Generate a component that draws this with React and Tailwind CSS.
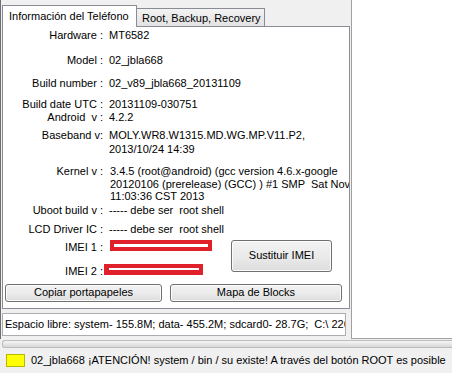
import React from 'react';

const Row = ({ label, className, children }) => {
  return (
    <div className={'flex leading-[13px] ' + className}>
      <div className="w-[100px] shrink-0 text-right whitespace-pre">{label}</div>
      <div className="pl-[6px] whitespace-pre">{children}</div>
    </div>
  );
};

const WinButton = ({ className, children }) => {
  return (
    <div
      className={
        'flex items-center justify-center rounded-[3px] border border-[#707070] bg-gradient-to-b from-[#f2f2f2] via-[#ebebeb] to-[#dddddd] shadow-[inset_0_0_0_1px_#fcfcfc] ' +
        className
      }
    >
      {children}
    </div>
  );
};

const App = () => {
  return (
    <div className="w-[452px] h-[373px] overflow-hidden bg-[#f0f0f0] flex flex-col font-['Liberation_Sans',Arial,sans-serif] text-[11px] text-black">
      <div className="flex h-[339px] shrink-0">
        {/* panel izquierdo */}
        <div className="w-[351px] h-full border-l border-[#6d6d6d] pl-[1px] flex flex-col">
          <div className="flex items-end h-[26px]">
            <div className="relative z-10 -mb-px h-[22px] w-[135px] bg-white border-t border-x border-[#898c95] pl-[6px] leading-[20px]">
              Información del Teléfono
            </div>
            <div className="h-[18px] w-[128px] border-t border-r border-[#898c95] bg-gradient-to-b from-[#f3f3f3] to-[#e2e2e2] pl-[5px] leading-[18px]">
              Root, Backup, Recovery
            </div>
          </div>

          <div className="w-[348px] h-[283px] border border-[#898c95] bg-white overflow-hidden flex flex-col">
            <Row label="Hardware :" className="mt-[2px]">MT6582</Row>
            <Row label="Model :" className="mt-[12px]">02_jbla668</Row>
            <Row label="Build number :" className="mt-[10px]">02_v89_jbla668_20131109</Row>
            <Row label="Build date UTC :" className="mt-[8px]">20131109-030751</Row>
            <Row label="Android  v :" className="mt-[0px]">4.2.2</Row>
            <div className="flex mt-[4px] leading-[14px]">
              <div className="w-[100px] shrink-0 text-right">Baseband v:</div>
              <div className="pl-[6px] whitespace-pre">
                {'MOLY.WR8.W1315.MD.WG.MP.V11.P2,\n2013/10/24 14:39'}
              </div>
            </div>
            <div className="flex mt-[9px] leading-[12.5px]">
              <div className="w-[100px] shrink-0 text-right">Kernel v :</div>
              <div className="pl-[7px] whitespace-pre">
                {'3.4.5 (root@android) (gcc version 4.6.x-google\n20120106 (prerelease) (GCC) ) #1 SMP  Sat Nov 9\n11:03:36 CST 2013'}
              </div>
            </div>
            <Row label="Uboot build v :" className="mt-[1px]">----- debe ser  root shell</Row>
            <Row label="LCD Driver IC :" className="mt-[6px]">----- debe ser  root shell</Row>

            <div className="flex">
              <div className="w-[228px] shrink-0 flex flex-col">
                <div className="flex leading-[13px] mt-[5px]">
                  <div className="w-[100px] shrink-0 text-right">IMEI 1 :</div>
                  <div className="relative pl-[6px]">
                    <span>.............................</span>
                    <div className="absolute left-[7px] -top-[1px] w-[102px] h-[11px] bg-[#e0202a] flex items-center justify-center">
                      <div className="w-[94px] h-[3px] bg-white" />
                    </div>
                  </div>
                </div>
                <div className="flex leading-[13px] mt-[11px]">
                  <div className="w-[100px] shrink-0 text-right">IMEI 2 :</div>
                  <div className="relative pl-[6px]">
                    <div className="absolute left-[1px] -top-[1px] w-[99px] h-[11px] bg-[#e0202a] flex items-center justify-center">
                      <div className="w-[90px] h-[2px] bg-white" />
                    </div>
                  </div>
                </div>
              </div>
              <WinButton className="w-[101px] h-[32px] mt-[4px]">Sustituir IMEI</WinButton>
            </div>

            <div className="flex mt-[6px] ml-[2px] gap-[8px]">
              <WinButton className="w-[157px] h-[18px]">Copiar portapapeles</WinButton>
              <WinButton className="w-[172px] h-[18px]">Mapa de Blocks</WinButton>
            </div>
          </div>

          <div className="mt-[4px] w-[344px] h-[23px] border border-[#abadb3] bg-white pl-[2px] leading-[21px] whitespace-pre overflow-hidden">
            Espacio libre: system- 155.8M; data- 455.2M; sdcard0- 28.7G;  C:\ 226-
          </div>
        </div>

        {/* panel derecho */}
        <div className="flex-1 h-full bg-white border-l border-b border-[#a0a0a0]" />
      </div>

      <div className="ml-[2px] mt-[1px] h-[8px] rounded-l-[3px] border border-r-0 border-[#bcbcbc] bg-gradient-to-b from-[#f6f6f6] to-[#d8d8d8]" />

      <div className="flex items-center h-[20px] mt-[2px] pl-[6px]">
        <div className="w-[19px] h-[13px] bg-[#ffff00] border border-[#b8b800]" />
        <div className="pl-[6px] whitespace-pre">
          02_jbla668 ¡ATENCIÓN! system / bin / su existe! A través del botón ROOT es posible
        </div>
      </div>
    </div>
  );
};

export default App;
